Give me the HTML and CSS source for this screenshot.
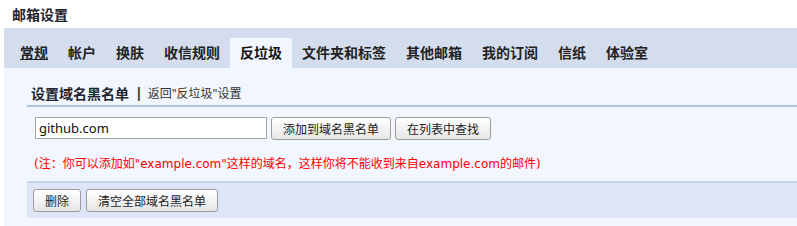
FILE: index.html
```html
<!DOCTYPE html>
<html>
	<head>
		<meta charset="utf-8">
		<title>邮箱设置</title>
		<link rel="stylesheet" href="styles.css">
	</head>
	<body>
    <div class="title">邮箱设置</div>
    <div class="main">
      <ul class="tabs">
        <li class="tab"><a href="#" class="first">常规</a></li>
        <li class="tab"><a href="#">帐户</a></li>
        <li class="tab"><a href="#">换肤</a></li>
        <li class="tab"><a href="#">收信规则</a></li>
        <li class="tab active"><a href="#">反垃圾</a></li>
        <li class="tab"><a href="#">文件夹和标签</a></li>
        <li class="tab"><a href="#">其他邮箱</a></li>
        <li class="tab"><a href="#">我的订阅</a></li>
        <li class="tab"><a href="#">信纸</a></li>
        <li class="tab"><a href="#">体验室</a></li>
      </ul>
      <div class="content">
        <div class="head">
          <b>设置域名黑名单</b>
          <span class="sep">|</span>
          <a href="#" class="back">返回"反垃圾"设置</a>
        </div>
        <div class="form">
          <input type="text" class="domain" value="github.com">
          <button class="btn">添加到域名黑名单</button>
          <button class="btn">在列表中查找</button>
        </div>
        <div class="note">(注：你可以添加如"example.com"这样的域名，这样你将不能收到来自example.com的邮件)</div>
        <div class="toolbar">
          <button class="btn">删除</button>
          <button class="btn">清空全部域名黑名单</button>
        </div>
      </div>
    </div>
	</body>
</html>
```

FILE: styles.css
```css
body {
  margin: 0;
  background-color: #fff;
  font-family: "Noto Sans", "Noto Sans CJK SC", sans-serif;
  font-size: 12px;
  color: #222;
  width: 820px;
}
.title {
  height: 28px;
  line-height: 29px;
  padding-left: 12px;
  font-size: 14px;
  font-weight: bold;
  color: #1e2530;
}
.main {
  margin-left: 4px;
}
.tabs {
  list-style: none;
  margin: 0;
  padding: 10px 0 0 6px;
  height: 30px;
  display: flex;
  background-color: #d4ddee;
}
.tab a {
  display: block;
  height: 30px;
  line-height: 30px;
  padding: 0 10px;
  font-size: 14px;
  font-weight: bold;
  color: #222;
  text-decoration: none;
}
.tab a.first {
  text-decoration: underline;
}
.tab.active a {
  background-color: #f2f6fe;
  color: #111;
}
.content {
  background-color: #f2f6fe;
  padding: 0 0 8px 23px;
}
.head {
  padding: 12px 0 0 4px;
  box-sizing: border-box;
  height: 39px;
  border-bottom: 2px solid #abc1df;
  display: flex;
  align-items: center;
}
.head b {
  font-size: 14px;
  color: #1e2530;
}
.sep {
  font-weight: bold;
  font-size: 14px;
  margin: 0 5px 0 6px;
  color: #1e2530;
}
.back {
  color: #333;
  text-decoration: none;
  font-size: 12px;
}
.form {
  display: flex;
  gap: 4px;
  padding: 10px 0 0 8px;
}
.domain {
  width: 232px;
  height: 22px;
  box-sizing: border-box;
  border: 1px solid #a5a5a5;
  padding: 0 3px;
  font-family: inherit;
  font-size: 13px;
  color: #111;
  background: #fff;
}
.btn {
  height: 23px;
  padding: 0 11px;
  border: 1px solid #9c9c9c;
  border-radius: 3px;
  background: linear-gradient(#ffffff, #e6e6e6);
  font-family: inherit;
  font-size: 12px;
  color: #222;
}
.note {
  color: #f00;
  font-family: "DejaVu Sans", "Noto Sans CJK SC", sans-serif;
  padding: 14px 0 0 7px;
  height: 27px;
}
.toolbar {
  display: flex;
  gap: 5px;
  padding: 6px 0 6px 6px;
  background-color: #dde5f7;
  border-top: 2px solid #c8d3e8;
}
```
